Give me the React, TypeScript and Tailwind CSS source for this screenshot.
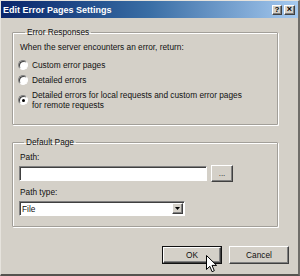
import React from 'react';

const raised =
  'bg-[#d4d0c8] border border-t-white border-l-white border-r-[#404040] border-b-[#404040] shadow-[inset_-1px_-1px_0_#808080]';
const sunken =
  'bg-white border border-t-[#808080] border-l-[#808080] border-r-white border-b-white shadow-[inset_1px_1px_0_#404040]';
const groupBox =
  'w-[266px] border border-[#a29f99] shadow-[inset_1px_1px_0_#fff,1px_1px_0_#fff] rounded-[1px]';

const Radio: React.FC<{ checked?: boolean }> = ({ checked }) => (
  <span
    className={`flex items-center justify-center w-[10px] h-[10px] shrink-0 rounded-full ${sunken}`}
  >
    {checked && <span className="w-[3px] h-[3px] rounded-full bg-black" />}
  </span>
);

const App: React.FC = () => {
  return (
    <div className="relative w-[300px] h-[276px] overflow-hidden bg-[#d4d0c8] border-l border-t border-l-[#e6e3dd] border-t-[#e6e3dd] border-r-2 border-b-2 border-r-[#6f6d69] border-b-[#55534f] flex flex-col font-['Liberation_Sans',Arial,sans-serif] text-[8.3px] leading-[10px] text-[#111]">
      {/* title bar */}
      <div className="h-[17px] shrink-0 flex items-center pl-[2px] pr-[3px] bg-gradient-to-r from-[#0a246a] via-[#3a6ea5] to-[#a6caf0]">
        <span className="text-white font-bold text-[9px]">Edit Error Pages Settings</span>
        <div className="ml-auto flex gap-[2px]">
          <span className={`w-[10px] h-[10px] flex items-center justify-center text-[8px] font-bold leading-none text-black ${raised}`}>?</span>
          <span className={`w-[11px] h-[10px] flex items-center justify-center text-[9px] font-bold leading-none text-black ${raised}`}>×</span>
        </div>
      </div>

      <div className="flex flex-col pl-[11px] pt-[9px]">
        <fieldset className={`${groupBox} h-[98px] pl-[7px]`}>
          <legend className="ml-[5px] px-[2px] leading-[11px]">Error Responses</legend>
          <p className="mt-[4px]">When the server encounters an error, return:</p>
          <div className="mt-[8px] flex flex-col gap-[5px] -ml-[2px]">
            <label className="flex items-center gap-[4px]">
              <Radio />
              <span>Custom error pages</span>
            </label>
            <label className="flex items-center gap-[4px]">
              <Radio />
              <span>Detailed errors</span>
            </label>
            <label className="flex items-center gap-[4px]">
              <Radio checked />
              <span>
                Detailed errors for local requests and custom error pages
                <br />
                for remote requests
              </span>
            </label>
          </div>
        </fieldset>

        <fieldset className={`${groupBox} h-[90px] mt-[12px] pl-[6px]`}>
          <legend className="ml-[5px] px-[2px] leading-[11px]">Default Page</legend>
          <p className="mt-[4px] pl-[1px]">Path:</p>
          <div className="mt-[3px] flex items-center gap-[4px]">
            <div className={`w-[188px] h-[15px] ${sunken}`} />
            <button className={`w-[22px] h-[17px] flex items-center justify-center text-[8px] leading-none ${raised}`}>
              ...
            </button>
          </div>
          <p className="mt-[5px] pl-[1px]">Path type:</p>
          <div className={`mt-[4px] w-[166px] h-[15px] flex items-center pl-[2px] pr-[1px] ${sunken}`}>
            <span>File</span>
            <span className={`ml-auto w-[11px] h-[11px] flex items-center justify-center ${raised}`}>
              <svg width="5" height="3" viewBox="0 0 5 3">
                <path d="M0 0h5L2.5 3z" fill="#000" />
              </svg>
            </span>
          </div>
        </fieldset>

        <div className="mt-[19px] w-[277px] flex justify-end gap-[7px]">
          <div className="w-[60px] h-[18px] border border-[#111]">
            <button className={`w-full h-full flex items-center justify-center ${raised}`}>OK</button>
          </div>
          <button className={`w-[60px] h-[18px] flex items-center justify-center ${raised}`}>Cancel</button>
        </div>
      </div>

      {/* mouse pointer */}
      <svg className="absolute left-[205px] top-[254px]" width="12" height="18" viewBox="0 0 12 18">
        <path d="M0.5 0.5v14l3.3-3.2 2.3 5.4 2.2-1-2.3-5.3h4.6z" fill="#fff" stroke="#000" strokeWidth="1" strokeLinejoin="round" />
      </svg>
    </div>
  );
};

export default App;
